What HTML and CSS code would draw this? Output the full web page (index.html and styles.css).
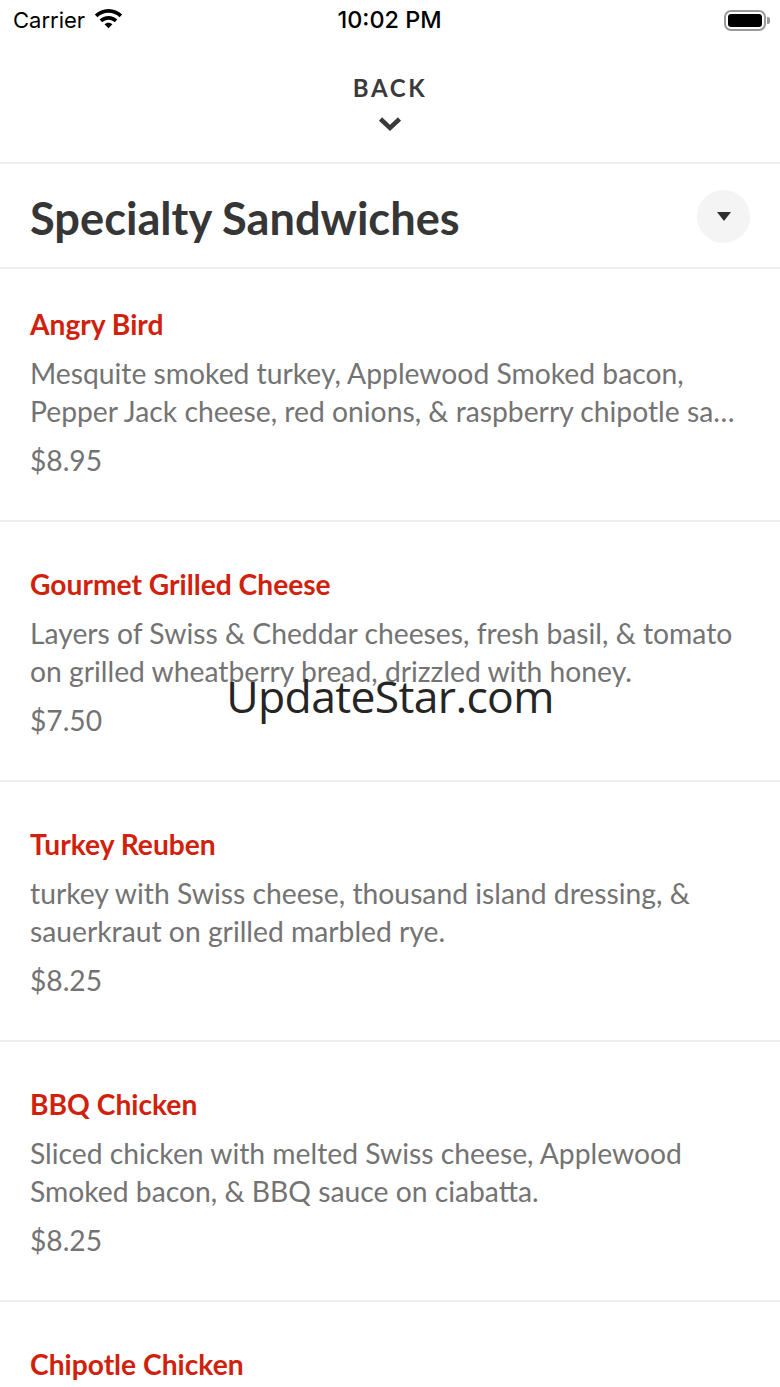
FILE: index.html
```html
<!DOCTYPE html>
<html lang="en">
<head>
<meta charset="UTF-8">
<meta name="viewport" content="width=device-width, initial-scale=1.0">
<title>Specialty Sandwiches</title>
<link rel="stylesheet" href="styles.css">
</head>
<body>
<div class="page">
	<div class="statusbar">
		<div class="status-left">
			<span class="carrier">Carrier</span>
			<svg class="wifi" width="29" height="21" viewBox="0 0 28 20">
				<path d="M14 .8c5.100 0 9.700 2 13.200 5.300l-2.500 2.600C21.900 6 18.100 4.400 14 4.400S6.100 6 3.300 8.700L.8 6.100C4.300 2.800 8.900.8 14 .8z"/>
				<path d="M14 7.600c3.300 0 6.300 1.300 8.500 3.400l-2.500 2.600c-1.600-1.500-3.700-2.400-6-2.400s-4.400.9-6 2.400L5.500 11c2.200-2.100 5.200-3.400 8.500-3.400z"/>
				<path d="M14 14c1.500 0 2.800.6 3.800 1.500L14 19.400l-3.800-3.900c1-.9 2.300-1.500 3.800-1.500z"/>
			</svg>
		</div>
		<span class="clock">10:02 PM</span>
		<div class="battery">
			<div class="battery-body"><div class="battery-fill"></div></div>
			<div class="battery-cap"></div>
		</div>
	</div>

	<div class="backbar">
		<span class="back-label">BACK</span>
		<svg class="back-chevron" width="24" height="16" viewBox="0 0 24 16">
			<path d="M2.500 3 12 12 21.500 3" fill="none" stroke="#3a3a3a" stroke-width="4.500"/>
		</svg>
	</div>

	<div class="section-head">
		<h1 class="section-title">Specialty Sandwiches</h1>
		<div class="toggle"><div class="toggle-arrow"></div></div>
	</div>

	<div class="items">
		<div class="item">
			<div class="item-name">Angry Bird</div>
			<div class="item-desc">Mesquite smoked turkey, Applewood Smoked bacon, <span class="item-desc-clip">Pepper Jack cheese, red onions, &amp; raspberry chipotle sauce on ciabatta.</span></div>
			<div class="item-price">$8.95</div>
		</div>
		<div class="item">
			<div class="item-name">Gourmet Grilled Cheese</div>
			<div class="item-desc">Layers of Swiss &amp; Cheddar cheeses, fresh basil, &amp; tomato on grilled wheatberry bread, drizzled with honey.</div>
			<div class="item-price">$7.50</div>
		</div>
		<div class="item">
			<div class="item-name">Turkey Reuben</div>
			<div class="item-desc">turkey with Swiss cheese, thousand island dressing, &amp; sauerkraut on grilled marbled rye.</div>
			<div class="item-price">$8.25</div>
		</div>
		<div class="item">
			<div class="item-name">BBQ Chicken</div>
			<div class="item-desc">Sliced chicken with melted Swiss cheese, Applewood Smoked bacon, &amp; BBQ sauce on ciabatta.</div>
			<div class="item-price">$8.25</div>
		</div>
		<div class="item">
			<div class="item-name">Chipotle Chicken</div>
		</div>
	</div>

	<div class="watermark">UpdateStar.com</div>
</div>
</body>
</html>
```

FILE: styles.css
```css
html, body {
	margin: 0;
	padding: 0;
	background: #fff;
}
.page {
	position: relative;
	width: 780px;
	height: 1387px;
	overflow: hidden;
	font-family: "Lato", sans-serif;
}

/* status bar */
.statusbar {
	display: flex;
	justify-content: space-between;
	align-items: center;
	height: 40px;
	padding: 0 10px 0 13px;
	font-family: "Inter", sans-serif;
	color: #000;
}
.status-left {
	display: flex;
	align-items: center;
	gap: 9px;
	width: 200px;
}
.carrier {
	font-size: 22px;
}
.wifi {
	margin-top: -4px;
}
.clock {
	margin-top: -1px;
	font-size: 23.400px;
	font-weight: 500;
}
.battery {
	display: flex;
	align-items: center;
	justify-content: flex-end;
	width: 204px;
	gap: 1px;
}
.battery-body {
	box-sizing: border-box;
	width: 42px;
	height: 21px;
	padding: 2px;
	border: 2px solid #999;
	border-radius: 7px;
}
.battery-fill {
	height: 100%;
	background: #000;
	border-radius: 3px;
}
.battery-cap {
	width: 3px;
	height: 7px;
	background: #999;
	border-radius: 0 2px 2px 0;
}

/* back bar */
.backbar {
	display: flex;
	flex-direction: column;
	align-items: center;
	height: 124px;
	box-sizing: border-box;
	padding-top: 34px;
	border-bottom: 2px solid #eee;
}
.back-label {
	font-size: 24px;
	line-height: 28px;
	font-weight: 700;
	letter-spacing: 2.600px;
	color: #3a3a3a;
}
.back-chevron {
	margin-top: 14px;
}

/* section header */
.section-head {
	display: flex;
	justify-content: space-between;
	align-items: center;
	height: 105px;
	box-sizing: border-box;
	padding: 0 30px;
	border-bottom: 2px solid #eee;
}
.section-title {
	margin: 4px 0 0;
	font-size: 45.200px;
	font-weight: 700;
	color: #363636;
}
.toggle {
	display: flex;
	align-items: center;
	justify-content: center;
	width: 53px;
	height: 53px;
	margin-top: 2px;
	border-radius: 50%;
	background: #f4f4f4;
}
.toggle-arrow {
	width: 0;
	height: 0;
	border-left: 7px solid transparent;
	border-right: 7px solid transparent;
	border-top: 9px solid #2e2e2e;
}

/* menu items */
.item {
	height: 260px;
	box-sizing: border-box;
	padding: 43px 30px 0;
	border-bottom: 2px solid #eee;
}
.item:first-child {
	height: 253px;
	padding-top: 36px;
}
.item-name {
	font-size: 28.200px;
	line-height: 38px;
	font-weight: 700;
	color: #d0210c;
}
.item-desc {
	margin-top: 11px;
	font-size: 28.270px;
	line-height: 38px;
	color: #737373;
}
.item-desc-clip {
	display: block;
	width: 706px;
	white-space: nowrap;
	overflow: hidden;
	text-overflow: ellipsis;
}
.item-price {
	margin-top: 11px;
	font-size: 28.200px;
	line-height: 38px;
	color: #737373;
}

.watermark {
	position: absolute;
	left: 0;
	right: 0;
	top: 665px;
	text-align: center;
	font-family: "Open Sans", sans-serif;
	font-size: 44.500px;
	line-height: 62px;
	letter-spacing: -0.650px;
	color: #252525;
}
```
